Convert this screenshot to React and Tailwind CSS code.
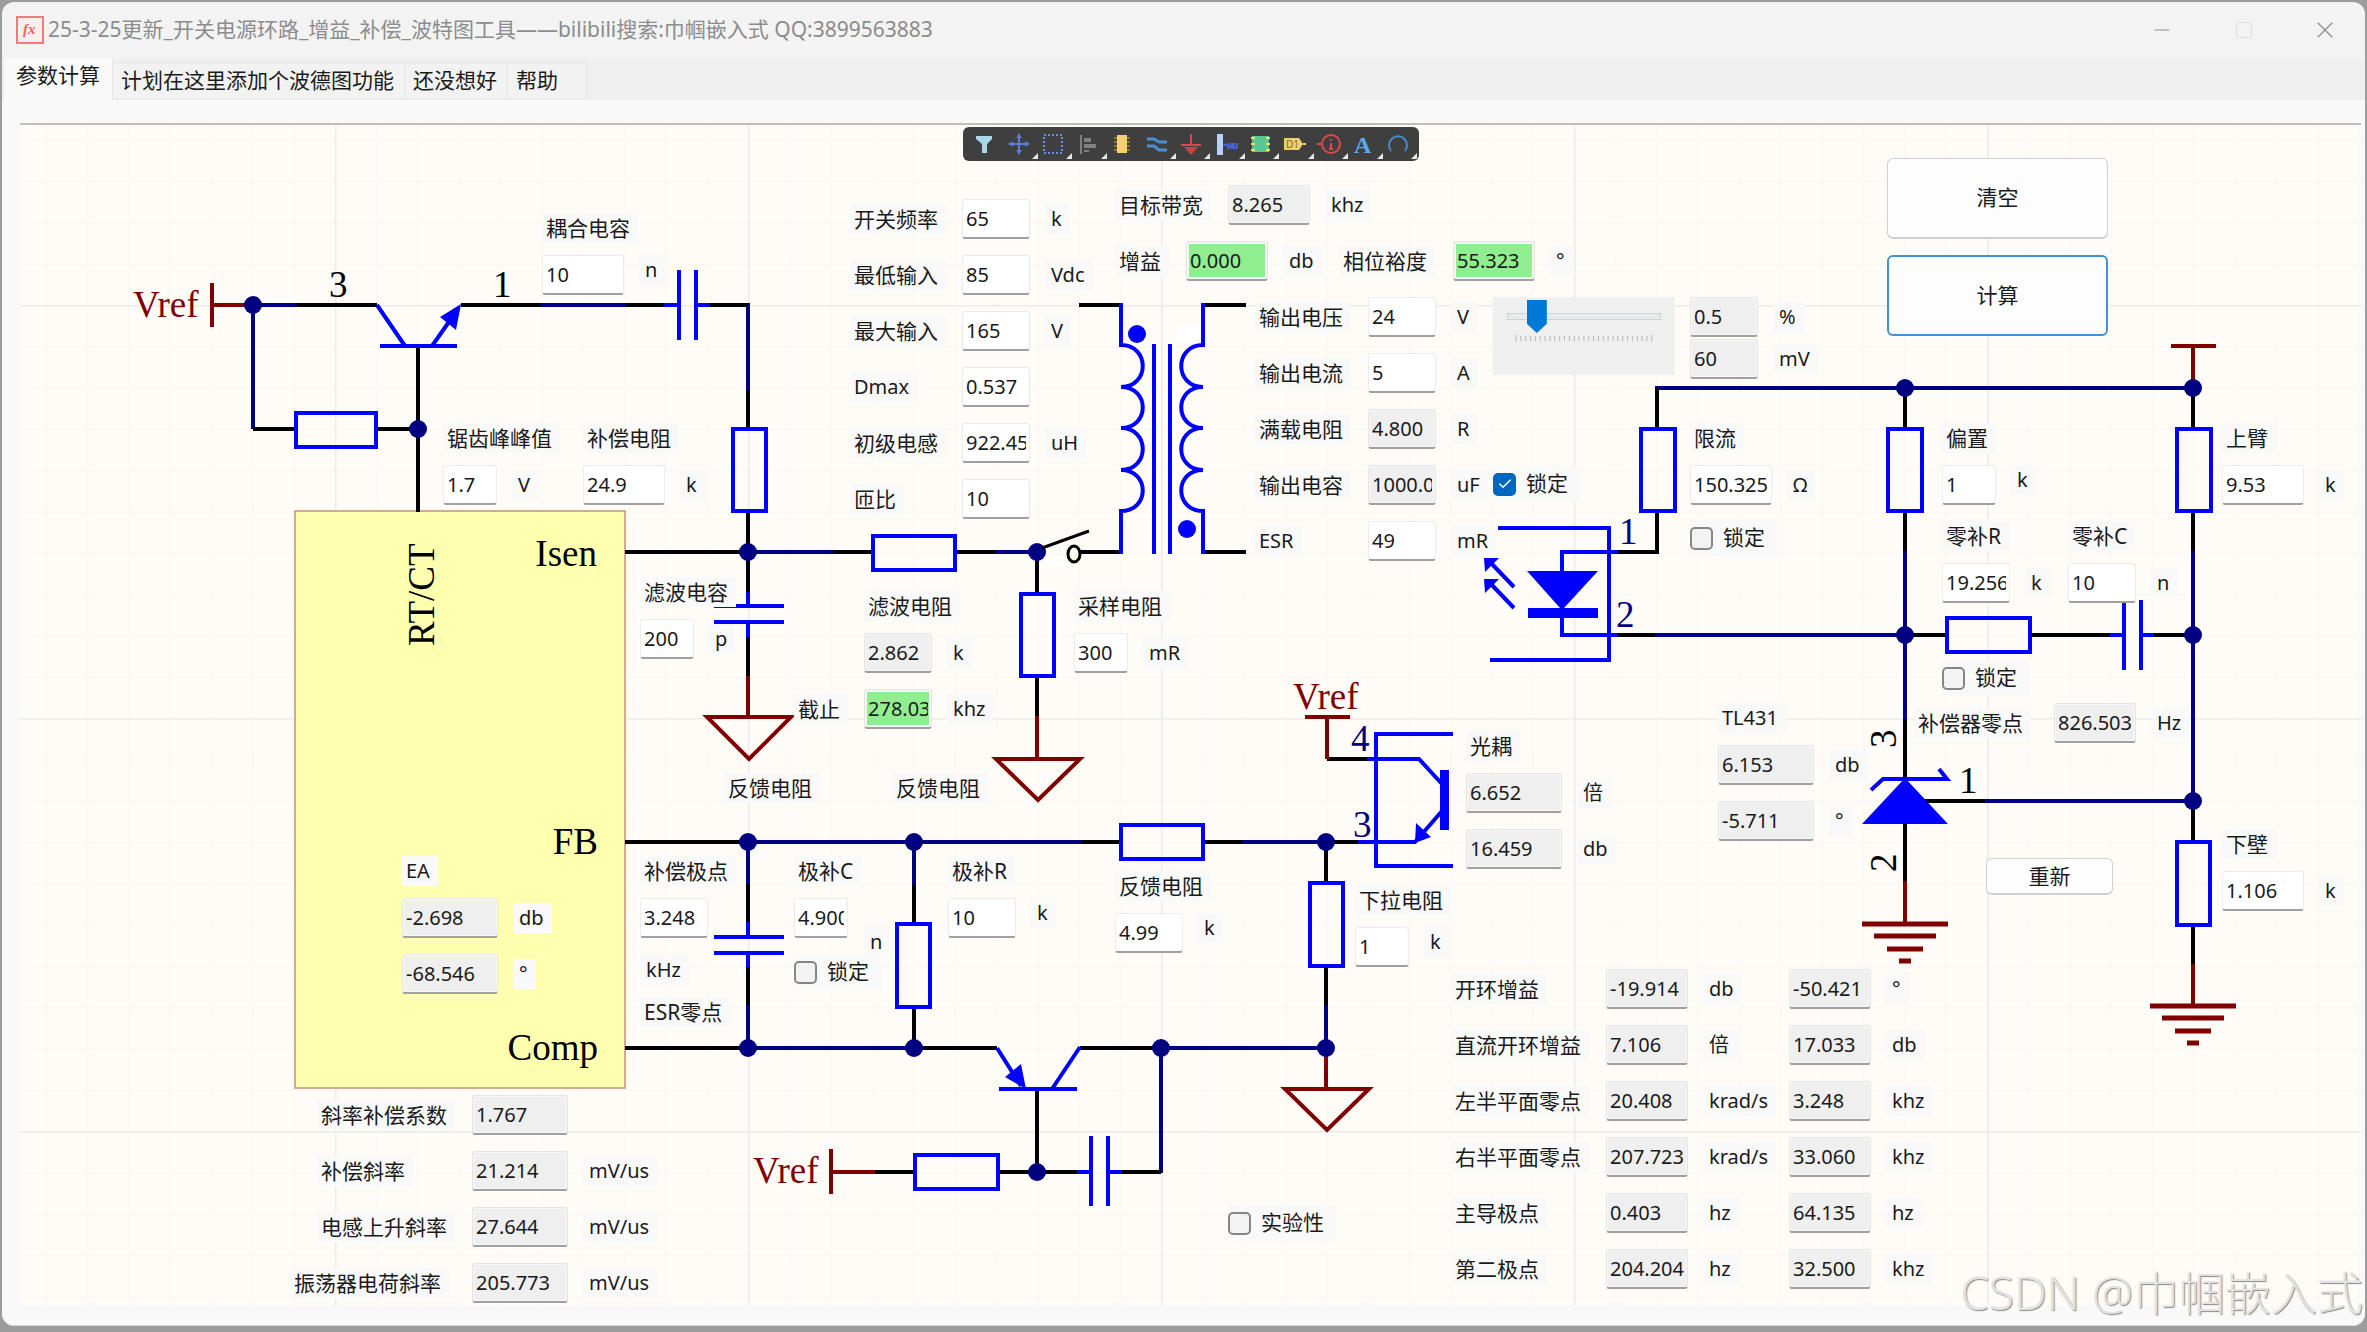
import React, { Fragment, useId } from 'react';
import { Check, Minus, Square, X } from 'lucide-react';

// the form uses window coordinates, the canvas starts below the tab bar
const ORIGIN = { x: 20, y: 125 };

const WIDTHS = {
  s: 'w-[54px]',
  m: 'w-[68px]',
  l: 'w-[82px]',
  xl: 'w-24',
};

const TONES = {
  edit: 'bg-white border-[#ececec]',
  read: 'bg-[#efefef] border-[#e4e4e4] shadow-[inset_0_0_0_1px_#f8f8f8]',
  ok: 'bg-[#90ee90] border-[#e4e4e4] shadow-[inset_0_0_0_2px_#f6f6f6]',
};

const Place = ({ x, y, className = '', children }) => (
  <div className={`absolute ${className}`} style={{ left: x - ORIGIN.x, top: y - ORIGIN.y }}>
    {children}
  </div>
);

const Label = ({ htmlFor, className = 'text-[21px]', children }) => (
  <label htmlFor={htmlFor} className={`h-[30px] justify-self-start whitespace-nowrap bg-[#f9f9f9] pl-1 pr-2 leading-[30px] ${className}`}>
    {children}
  </label>
);

const Unit = ({ className = '', children }) => (
  <span className={`h-[30px] justify-self-start whitespace-nowrap bg-[#f9f9f9] pl-[6px] pr-2 text-xl leading-[30px] ${className}`}>
    {children}
  </span>
);

const Field = ({ id, label, value, w = 'm', tone = 'edit' }) => (
  <input
    id={id}
    aria-label={label}
    type="text"
    defaultValue={value}
    readOnly={tone !== 'edit'}
    className={`h-10 rounded-[3px] border border-b-2 border-b-[#a0a0a0] px-[3px] text-xl outline-none ${WIDTHS[w]} ${TONES[tone]}`}
  />
);

// label on top, value and unit below
const Part = ({ x, y, name, value, unit, w, tone, labelClass, unitClass }) => {
  const id = useId();
  return (
    <Place x={x} y={y} className="flex flex-col items-start gap-3">
      <Label htmlFor={id} className={labelClass}>{name}</Label>
      <div className="flex items-center gap-[15px]">
        <Field id={id} value={value} w={w} tone={tone} />
        {unit && <Unit className={unitClass}>{unit}</Unit>}
      </div>
    </Place>
  );
};

// heading with several results below
const Results = ({ x, y, name, rows, labelClass = 'text-[21px]' }) => (
  <Place x={x} y={y} className="flex flex-col items-start gap-3">
    <span className={`h-[30px] bg-[#f9f9f9] pl-1 pr-2 leading-[30px] ${labelClass}`}>{name}</span>
    <div className="flex flex-col gap-4">
      {rows.map(([value, unit]) => (
        <div key={unit} className="flex items-center gap-[15px]">
          <Field label={`${name} ${unit}`} value={value} w="xl" tone="read" />
          <Unit>{unit}</Unit>
        </div>
      ))}
    </div>
  </Place>
);

const Row = ({ name, latin, cells }) => {
  const id = useId();
  return (
    <>
      <Label htmlFor={`${id}0`} className={latin ? 'text-xl' : 'text-[21px]'}>{name}</Label>
      {cells.map(([value, unit, w, tone], i) => (
        <Fragment key={i}>
          <Field id={`${id}${i}`} label={i > 0 ? `${name} ${unit}` : undefined} value={value} w={w} tone={tone} />
          {unit ? <Unit>{unit}</Unit> : <span />}
        </Fragment>
      ))}
    </>
  );
};

const CheckItem = ({ x, y, checked, children }) => (
  <Place x={x} y={y}>
    <label className="flex h-9 items-center gap-[10px] bg-[#f9f9f9] pr-3 text-[21px]">
      <span className="grid">
        <input
          type="checkbox"
          defaultChecked={checked}
          className="peer col-start-1 row-start-1 size-[23px] appearance-none rounded-[5px] border-2 border-[#868686] bg-[#f3f3f3] checked:border-[#0067c0] checked:bg-[#0067c0]"
        />
        <Check className="pointer-events-none invisible col-start-1 row-start-1 m-auto size-4 text-white peer-checked:visible" strokeWidth={2} />
      </span>
      {children}
    </label>
  </Place>
);

const INPUTS = [
  { name: '开关频率', cells: [['65', 'k']] },
  { name: '最低输入', cells: [['85', 'Vdc']] },
  { name: '最大输入', cells: [['165', 'V']] },
  { name: 'Dmax', latin: true, cells: [['0.537', '']] },
  { name: '初级电感', cells: [['922.455', 'uH']] },
  { name: '匝比', cells: [['10', '']] },
];

const OUTPUTS = [
  { name: '输出电压', cells: [['24', 'V']] },
  { name: '输出电流', cells: [['5', 'A']] },
  { name: '满载电阻', cells: [['4.800', 'R', 'm', 'read']] },
  { name: '输出电容', cells: [['1000.000', 'uF', 'm', 'read']] },
  { name: 'ESR', latin: true, cells: [['49', 'mR']] },
];

const SLOPES = [
  { name: '斜率补偿系数', cells: [['1.767', '', 'xl', 'read']] },
  { name: '补偿斜率', cells: [['21.214', 'mV/us', 'xl', 'read']] },
  { name: '电感上升斜率', cells: [['27.644', 'mV/us', 'xl', 'read']] },
];

const LOOP = [
  { name: '开环增益', cells: [['-19.914', 'db', 'l', 'read'], ['-50.421', '°', 'l', 'read']] },
  { name: '直流开环增益', cells: [['7.106', '倍', 'l', 'read'], ['17.033', 'db', 'l', 'read']] },
  { name: '左半平面零点', cells: [['20.408', 'krad/s', 'l', 'read'], ['3.248', 'khz', 'l', 'read']] },
  { name: '右半平面零点', cells: [['207.723', 'krad/s', 'l', 'read'], ['33.060', 'khz', 'l', 'read']] },
  { name: '主导极点', cells: [['0.403', 'hz', 'l', 'read'], ['64.135', 'hz', 'l', 'read']] },
  { name: '第二极点', cells: [['204.204', 'hz', 'l', 'read'], ['32.500', 'khz', 'l', 'read']] },
];

const PARTS = [
  { x: 542, y: 213, name: '耦合电容', value: '10', unit: 'n', w: 'l', unitClass: 'self-start' },
  { x: 443, y: 423, name: '锯齿峰峰值', value: '1.7', unit: 'V', w: 's' },
  { x: 583, y: 423, name: '补偿电阻', value: '24.9', unit: 'k', w: 'l' },
  { x: 640, y: 577, name: '滤波电容', value: '200', unit: 'p', w: 's' },
  { x: 864, y: 591, name: '滤波电阻', value: '2.862', unit: 'k', w: 'm', tone: 'read' },
  { x: 1074, y: 591, name: '采样电阻', value: '300', unit: 'mR', w: 's' },
  { x: 1690, y: 423, name: '限流', value: '150.325', unit: 'Ω', w: 'l' },
  { x: 1942, y: 423, name: '偏置', value: '1', unit: 'k', w: 's', unitClass: 'self-start' },
  { x: 2222, y: 423, name: '上臂', value: '9.53', unit: 'k', w: 'l' },
  { x: 1942, y: 521, name: '零补R', value: '19.256', unit: 'k', w: 'm' },
  { x: 2068, y: 521, name: '零补C', value: '10', unit: 'n', w: 'm' },
  { x: 2222, y: 829, name: '下壁', value: '1.106', unit: 'k', w: 'l' },
  { x: 1355, y: 885, name: '下拉电阻', value: '1', unit: 'k', w: 's', unitClass: 'self-start' },
  { x: 1115, y: 871, name: '反馈电阻', value: '4.99', unit: 'k', w: 'm', unitClass: 'self-start' },
  { x: 640, y: 856, name: '补偿极点', value: '3.248', w: 'm' },
  { x: 794, y: 856, name: '极补C', value: '4.900', w: 's' },
  { x: 948, y: 856, name: '极补R', value: '10', unit: 'k', w: 'm', unitClass: 'self-start' },
];

// wires, grouped by colour
const WIRES = {
  '#000080':
    'M253 305H297M253 305V429M540 305H627M748 303V390M748 552H833M995 552H1037M748 842H1081M1242 842H1326' +
    'M748 842V884M748 1005V1048M914 842V885M748 1048H914M1161 1048H1326M1161 1048V1173M1326 1005V1048' +
    'M1655 388H2193M1655 635H1905M1905 551V720M2193 551V800M1985 801H2193',
  '#000000':
    'M297 305H377M461 305H540M627 305H664M710 305H748M748 390V428M748 513V592M418 348V512M253 429H295M378 429H418' +
    'M625 552H748M833 552H871M957 552H995M1081 552H1121M1079 305H1121M1203 305H1246M1203 552H1246' +
    'M748 637V676M1037 552V592M1037 678V716M625 842H748M1081 842H1119M1205 842H1242M1326 842H1358' +
    'M748 884V922M748 967V1005M914 885V922M914 1009V1048M625 1048H748M914 1048H997M1080 1048H1161' +
    'M1037 1091V1171M875 1172H913M999 1172H1077M1122 1172H1161M1326 842V881M1326 967V1005M1327 759H1367' +
    'M1657 388V427M1657 513V552M1659 552H1618M1617 635H1655M1905 388V427M1905 513V551M1905 720V780M1905 823V881' +
    'M1925 801H1985M1905 635H1945M2031 635H2110M2154 635H2193M2193 388V427M2193 513V551M2193 800V840M2193 926V964',
  '#800000':
    'M212 305H253M212 283V327M748 676V717M707 717H791L749 759ZM1037 716V759M996 759H1080L1038 800Z' +
    'M831 1172H875M831 1149V1194M1326 1048V1089M1285 1089H1369L1327 1130ZM1327 717V759M1305 717H1350' +
    'M2193 388V346M2171 346H2216M1905 881V924M2193 964V1006',
  '#0000ff':
    'M377 305L405 346M380 346H457M432 346L458 309M664 305H679M679 270V340M696 270V340M696 305H710' +
    'M748 592V606M714 606H784M714 622H784M748 622V637M748 922V937M714 937H784M714 953H784M748 953V967' +
    'M997 1048L1021 1086M999 1089H1077M1052 1089L1080 1047M1077 1172H1091M1091 1136V1206M1108 1136V1206M1108 1172H1122' +
    'M1121 303V345C1150 345 1150 387 1121 387C1150 387 1150 428 1121 428C1150 428 1150 470 1121 470C1150 470 1150 511 1121 511V554' +
    'M1203 303V345C1174 345 1174 387 1203 387C1174 387 1174 428 1203 428C1174 428 1174 470 1203 470C1174 470 1174 511 1203 511V554' +
    'M1154 344V554M1170 344V554M1453 734H1376V866H1453M1367 759H1419L1442 784M1442 811L1415 842H1358' +
    'M1498 528H1609V660H1490M1618 552H1562V575M1562 612V635H1618M1514 587L1490 562M1514 608L1490 583' +
    'M2110 635H2123M2124 600V670M2141 600V670M2141 635H2154M1871 790L1883 779H1947L1939 769',
};

const RESISTORS = [
  [296, 413, 80, 34], [733, 429, 33, 82], [873, 536, 82, 34], [1021, 594, 33, 82],
  [1121, 825, 82, 34], [897, 924, 33, 83], [915, 1155, 83, 34], [1310, 883, 33, 83],
  [1641, 429, 34, 82], [1888, 429, 34, 82], [2177, 429, 34, 82], [1947, 618, 83, 34], [2177, 842, 33, 83],
];

const NODES = [
  [253, 305], [418, 429], [748, 552], [1037, 552], [748, 842], [914, 842], [748, 1048], [914, 1048],
  [1161, 1048], [1326, 1048], [1326, 842], [1037, 1172], [1905, 388], [2193, 388], [1905, 635], [2193, 635], [2193, 801],
];

const GROUNDS = [[1905, 924], [2193, 1006]];

const Schematic = () => (
  <svg className="absolute inset-0 size-full" aria-hidden="true">
    <defs>
      <pattern id="minor" x="26" y="15" width="41.3" height="41.3" patternUnits="userSpaceOnUse">
        <path d="M.5 0V42M0 .5H42" stroke="#faf8f4" fill="none" />
      </pattern>
      <pattern id="major" x="315" y="180" width="413" height="413" patternUnits="userSpaceOnUse">
        <path d="M.5 0V413M0 .5H413" stroke="#edebe8" strokeWidth="2" fill="none" />
      </pattern>
    </defs>
    <rect width="100%" height="100%" fill="url(#minor)" />
    <rect width="100%" height="100%" fill="url(#major)" />
    <g transform="translate(-20 -125)">
      <rect x="295" y="511" width="330" height="577" fill="#ffffb0" stroke="#c89078" strokeWidth="1.5" />
      <path d="M1176 325h24v18h-24zM1045 556h26v10h-26z" fill="#fff" />
      {Object.entries(WIRES).map(([color, d]) => (
        <path key={color} d={d} stroke={color} strokeWidth="4" fill="none" />
      ))}
      <g stroke="#0000ff" strokeWidth="4" fill="none">
        {RESISTORS.map(([x, y, w, h]) => (
          <rect key={`${x}-${y}`} x={x} y={y} width={w} height={h} />
        ))}
      </g>
      <g fill="#0000ff">
        <path d="M461 304L440 317L456 330ZM1026 1089L1005 1077L1021 1064ZM1415 843L1416 823L1431 837Z" />
        <path d="M1527 571H1598L1564 608H1598V618H1528V608H1560ZM1440 770h9v60h-9zM1905 778L1948 824H1862Z" />
        <path d="M1484 558H1499L1485 572ZM1484 579H1499L1485 593Z" />
        <circle cx="1137" cy="334" r="9" />
        <circle cx="1187" cy="529" r="9" />
      </g>
      <g fill="#000080">
        {NODES.map(([x, y]) => (
          <circle key={`${x}-${y}`} cx={x} cy={y} r="9" />
        ))}
      </g>
      <path d="M1042 548L1089 531" stroke="#000" strokeWidth="3" />
      <ellipse cx="1074" cy="554" rx="6" ry="8" stroke="#000" strokeWidth="3" fill="none" />
      <g stroke="#800000" strokeWidth="5">
        {GROUNDS.map(([x, y]) => (
          <path key={x} d={`M${x - 43} ${y}h86M${x - 31} ${y + 12}h62M${x - 18} ${y + 25}h36M${x - 6} ${y + 37}h12`} />
        ))}
      </g>
      <g className="font-['Liberation_Serif',serif] text-[37px]">
        <g fill="#800000">
          <text x="133" y="317">Vref</text>
          <text x="753" y="1183">Vref</text>
          <text x="1293" y="709">Vref</text>
        </g>
        <text x="329" y="297">3</text>
        <text x="493" y="297">1</text>
        <text x="597" y="566" textAnchor="end">Isen</text>
        <text x="598" y="854" textAnchor="end">FB</text>
        <text x="598" y="1060" textAnchor="end">Comp</text>
        <text transform="translate(434 646) rotate(-90)">RT/CT</text>
        <text transform="translate(1896 748) rotate(-90)">3</text>
        <text transform="translate(1896 872) rotate(-90)">2</text>
        <text x="1959" y="793">1</text>
        <g fill="#000080">
          <text x="1351" y="751">4</text>
          <text x="1353" y="837">3</text>
          <text x="1619" y="544">1</text>
          <text x="1616" y="627">2</text>
        </g>
      </g>
    </g>
  </svg>
);

const TOOLS = [
  ['筛选', <path d="M4 4h16v3l-5 5v9h-5v-9L4 7z" fill="#a9d8e8" />],
  ['移动', <path d="M12 4v17M4 12h17M12 3l-1 2h2zM12 21l-1-2h2zM3 12l2-1v2zM21 12l-2-1v2z" stroke="#5b7fd8" strokeWidth="2" fill="#5b7fd8" />],
  ['框选', <rect x="3" y="3" width="18" height="18" stroke="#6b8be8" strokeWidth="2" strokeDasharray="2 2" fill="none" />],
  ['对齐', <path d="M4 3h2v19H4zM8 6h7v4H8zM8 12h12v4H8zM8 18h5v2H8z" fill="#808080" />],
  ['元件', <><path d="M4 6h16M4 10h16M4 14h16M4 18h16" stroke="#8a7434" strokeWidth="2" /><rect x="7" y="3" width="10" height="18" fill="#f5cf72" /></>],
  ['导线', <path d="M2 7h7l5 3h8M2 14h7l5 4h8" stroke="#4a90d0" strokeWidth="3" fill="none" />],
  ['接地', <><path d="M12 2v11M2 13h20" stroke="#d84848" strokeWidth="2" /><path d="M5 15h14l-7 8z" fill="#c84444" /></>],
  ['总线', <><rect x="3" y="2" width="6" height="21" fill="#b8d0fa" /><path d="M9 13h5M14 11v6l2-4 2 4v-6M20 11v5h3v-5" stroke="#4a60d0" strokeWidth="2" fill="none" /></>],
  ['图表符', <><rect x="4" y="4" width="17" height="16" fill="#58c890" /><path d="M3 6h4M3 12h4M3 18h4M18 6h4M18 12h4M18 18h4" stroke="#f0e070" strokeWidth="2" /></>],
  ['端口', <><path d="M2 6h15l4 6-4 6H2zM21 11h3v2h-3z" fill="#ecd070" /><text x="4" y="16" fontSize="10" fill="#8a6a10">D1</text></>],
  ['指示', <><circle cx="14" cy="12" r="9" stroke="#e04848" strokeWidth="2" fill="none" /><path d="M0 12h5M14 7v2M14 11v6M12 17h4" stroke="#e04848" strokeWidth="2" /></>],
  ['文本', <text x="3" y="21" fontSize="24" fontWeight="bold" fill="#5aa8f0" fontFamily="Liberation Serif">A</text>],
  ['圆弧', <path d="M5 19A9 9 0 1 1 19 19" stroke="#4a8ac8" strokeWidth="2" fill="none" />],
];

const Toolbar = () => (
  <Place x={963} y={127} className="flex h-[34px] w-[456px] rounded-md bg-[#3f3f3f] px-1">
    {TOOLS.map(([name, icon], i) => (
      <button key={name} type="button" aria-label={name} className="relative flex flex-1 items-center justify-center">
        <svg viewBox="0 0 24 24" className="size-6 overflow-visible">{icon}</svg>
        {i !== 0 && i !== 4 && (
          <svg viewBox="0 0 6 6" className="absolute bottom-[2px] right-[-2px] size-[6px]"><path d="M6 0v6H0z" fill="#e8e8e8" /></svg>
        )}
      </button>
    ))}
  </Place>
);

const TICKS = Array.from({ length: 29 }, (_, i) => i);

const RippleSlider = () => (
  <Place x={1493} y={297} className="flex h-[78px] w-[182px] flex-col bg-[#efefef] px-[14px] pt-[3px]">
    <input
      type="range"
      aria-label="纹波"
      min="0"
      max="28"
      defaultValue="4"
      className="h-[33px] w-full appearance-none bg-transparent [&::-webkit-slider-runnable-track]:h-[7px] [&::-webkit-slider-runnable-track]:border [&::-webkit-slider-runnable-track]:border-[#d2d2d2] [&::-webkit-slider-runnable-track]:bg-[#e7eaea] [&::-webkit-slider-thumb]:-mt-[14px] [&::-webkit-slider-thumb]:h-[33px] [&::-webkit-slider-thumb]:w-5 [&::-webkit-slider-thumb]:appearance-none [&::-webkit-slider-thumb]:bg-[#0078d7] [&::-webkit-slider-thumb]:[clip-path:polygon(0_0,100%_0,100%_72%,50%_100%,0_72%)]"
    />
    <svg className="mt-[2px] h-[7px] w-full" viewBox="0 0 154 7" aria-hidden="true">
      {TICKS.map((i) => (
        <path key={i} d={`M${9 + i * 4.85} ${i % 28 ? 1 : 0}v${i % 28 ? 5 : 7}`} stroke="#b8b8b8" />
      ))}
    </svg>
  </Place>
);

const TitleBar = () => (
  <header className="flex h-14 items-center pl-[14px] text-[#8c8c8c]">
    <svg viewBox="0 0 28 28" className="size-7" aria-hidden="true">
      <rect x="1" y="1" width="26" height="26" fill="#fdeeee" stroke="#f07c7c" strokeWidth="2" />
      <text x="7" y="18" fontSize="15" fontStyle="italic" fontWeight="bold" fontFamily="Liberation Serif" fill="#f06060">fx</text>
    </svg>
    <h1 className="ml-1 grow text-[21px]">25-3-25更新_开关电源环路_增益_补偿_波特图工具——bilibili搜索:巾帼嵌入式 QQ:3899563883</h1>
    <button type="button" aria-label="最小化" className="flex h-full w-[82px] items-center justify-center"><Minus className="size-6" strokeWidth={1} /></button>
    <button type="button" aria-label="最大化" className="flex h-full w-[82px] items-center justify-center text-[#d8d8d8]"><Square className="size-5" strokeWidth={1} /></button>
    <button type="button" aria-label="关闭" className="flex h-full w-[80px] items-center justify-center"><X className="size-7" strokeWidth={1} /></button>
  </header>
);

const Tabs = () => (
  <nav role="tablist" className="flex h-[42px] items-end bg-[#efefef] pl-[2px] text-[21px]">
    <button type="button" role="tab" aria-selected="true" className="h-[42px] border-r border-[#e6e6e6] bg-[#f9f9f9] px-3 pb-[7px]">参数计算</button>
    {['计划在这里添加个波德图功能', '还没想好', '帮助'].map((tab) => (
      <button key={tab} type="button" role="tab" aria-selected="false" className="h-[38px] border border-l-0 border-[#e6e6e6] bg-[#f2f2f2] pl-2 pr-[10px] last:pr-7">{tab}</button>
    ))}
  </nav>
);

const pushButton = 'rounded-md border bg-[#fdfdfd] text-[21px]';

export default function App() {
  return (
    <div className="flex min-h-screen flex-col bg-[#9c9c9c] pb-[6px] pl-[2px] pr-[2px] pt-[2px] font-['Noto_Sans','Noto_Sans_CJK_SC',sans-serif] text-[#1a1a1a]">
      <div className="flex grow flex-col rounded-xl border-b border-[#d8d8d8] bg-[#f3f3f3]">
        <TitleBar />
        <Tabs />
        <main className="flex grow flex-col rounded-b-xl bg-[#f9f9f9] pb-5 pl-[18px] pr-1 pt-[25px]">
          <div className="relative min-h-[1150px] grow overflow-hidden bg-[#fffcf8] shadow-[0_-2px_0_#bdbdbd]">
            <Schematic />
            <Toolbar />

            <Place x={850} y={199} className="grid grid-cols-[112px_83px_auto] items-center gap-y-4">
              {INPUTS.map((row) => <Row key={row.name} {...row} />)}
            </Place>
            <Place x={1115} y={185} className="grid grid-cols-[113px_97px_auto] items-center">
              <Row name="目标带宽" cells={[['8.265', 'khz', 'l', 'read']]} />
            </Place>
            <Place x={1115} y={241} className="grid grid-cols-[71px_97px_56px] items-center">
              <Row name="增益" cells={[['0.000', 'db', 'l', 'ok']]} />
            </Place>
            <Place x={1339} y={241} className="grid grid-cols-[114px_97px_auto] items-center">
              <Row name="相位裕度" cells={[['55.323', '°', 'l', 'ok']]} />
            </Place>
            <Place x={1255} y={297} className="grid grid-cols-[113px_83px_auto] items-center gap-y-4">
              {OUTPUTS.map((row) => <Row key={row.name} {...row} />)}
            </Place>
            <CheckItem x={1493} y={466} checked>锁定</CheckItem>
            <RippleSlider />
            <Place x={1690} y={297} className="grid grid-cols-[83px_auto] items-center gap-y-[2px]">
              <Field label="纹波百分比" value="0.5" tone="read" />
              <Unit>%</Unit>
              <Field label="纹波电压" value="60" tone="read" />
              <Unit>mV</Unit>
            </Place>

            <Place x={1887} y={158} className="flex w-[221px] flex-col gap-4">
              <button type="button" className={`${pushButton} h-[81px] border-[#d0d0d0] border-b-2`}>清空</button>
              <button type="button" className={`${pushButton} h-[81px] border-2 border-[#3f92d8]`}>计算</button>
            </Place>

            {PARTS.map((part) => <Part key={`${part.x}-${part.y}`} {...part} />)}

            <CheckItem x={1690} y={520}>锁定</CheckItem>
            <CheckItem x={1942} y={660}>锁定</CheckItem>
            <CheckItem x={794} y={954}>锁定</CheckItem>
            <CheckItem x={1228} y={1205}>实验性</CheckItem>

            <Place x={794} y={689} className="grid grid-cols-[70px_83px_auto] items-center">
              <Row name="截止" cells={[['278.035', 'khz', 'm', 'ok']]} />
            </Place>
            <Place x={1914} y={703} className="grid grid-cols-[140px_97px_auto] items-center">
              <Row name="补偿器零点" cells={[['826.503', 'Hz', 'l', 'read']]} />
            </Place>

            <Results x={1718} y={703} name="TL431" labelClass="text-xl" rows={[['6.153', 'db'], ['-5.711', '°']]} />
            <Results x={1466} y={731} name="光耦" rows={[['6.652', '倍'], ['16.459', 'db']]} />
            <Results x={402} y={856} name="EA" labelClass="text-xl" rows={[['-2.698', 'db'], ['-68.546', '°']]} />

            <Place x={724} y={773} className="flex gap-[72px]">
              <Label>反馈电阻</Label>
              <Label>反馈电阻</Label>
            </Place>
            <Place x={640} y={955} className="flex flex-col items-start gap-3">
              <Unit>kHz</Unit>
              <Label>ESR零点</Label>
            </Place>
            <Place x={864} y={927} className="flex"><Unit>n</Unit></Place>

            <Place x={1986} y={858} className="flex w-[127px] flex-col">
              <button type="button" className={`${pushButton} h-[37px] border-[#d0d0d0] border-b-2 leading-none`}>重新</button>
            </Place>

            <Place x={317} y={1095} className="grid grid-cols-[155px_111px_auto] items-center gap-y-4">
              {SLOPES.map((row) => <Row key={row.name} {...row} />)}
            </Place>
            <Place x={290} y={1263} className="grid grid-cols-[182px_111px_auto] items-center">
              <Row name="振荡器电荷斜率" cells={[['205.773', 'mV/us', 'xl', 'read']]} />
            </Place>
            <Place x={1451} y={969} className="grid grid-cols-[155px_97px_86px_97px_auto] items-center gap-y-4">
              {LOOP.map((row) => <Row key={row.name} {...row} />)}
            </Place>
          </div>
        </main>
      </div>
      <div className="pointer-events-none absolute bottom-[6px] right-1 text-[46px] font-light leading-[68px] text-[#e2e2e2] [text-shadow:1px_1px_1px_#8a8a8a]">
        CSDN @巾帼嵌入式
      </div>
    </div>
  );
}
